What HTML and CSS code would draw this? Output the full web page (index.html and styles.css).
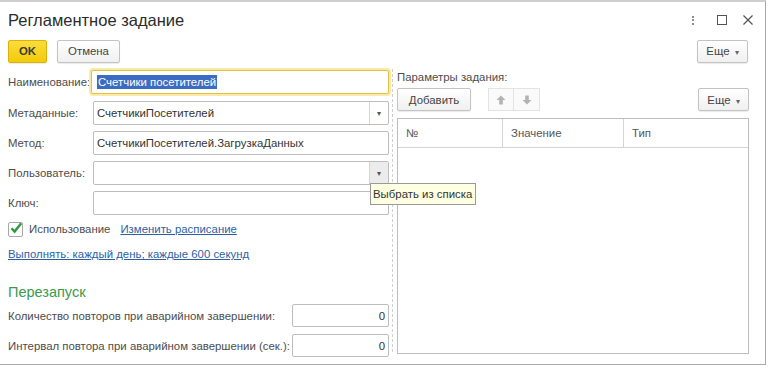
FILE: index.html
```html
<!DOCTYPE html>
<html lang="ru">
<head>
  <meta charset="UTF-8" />
  <title>Регламентное задание</title>
  <link rel="stylesheet" href="styles.css">
</head>
<body>
  <div class="window">
    <div class="title-bar">
      <div class="title">Регламентное задание</div>
      <div class="win-icons">
        <span class="icon-more"><i></i><i></i><i></i></span>
        <span class="icon-max"></span>
        <svg class="icon-close" width="10" height="10" viewBox="0 0 10 10"><path d="M0.5 0.5 L9.5 9.5 M9.5 0.5 L0.5 9.5" stroke="#555" stroke-width="1.2" fill="none"/></svg>
      </div>
    </div>

    <div class="toolbar">
      <button class="btn btn-ok">OK</button>
      <button class="btn btn-cancel">Отмена</button>
      <div class="spacer"></div>
      <button class="btn btn-more">Еще <span class="caret">▾</span></button>
    </div>

    <div class="content">
      <div class="left-col">
        <div class="form-row row-name">
          <label>Наименование:</label>
          <div class="field focused"><span class="selected">Счетчики посетителей</span></div>
        </div>
        <div class="form-row">
          <label>Метаданные:</label>
          <div class="field with-drop"><span class="value">СчетчикиПосетителей</span><span class="drop">▾</span></div>
        </div>
        <div class="form-row">
          <label>Метод:</label>
          <div class="field"><span class="value">СчетчикиПосетителей.ЗагрузкаДанных</span></div>
        </div>
        <div class="form-row">
          <label>Пользователь:</label>
          <div class="field with-drop"><span class="value"></span><span class="drop hover">▾</span></div>
          <div class="tooltip">Выбрать из списка</div>
        </div>
        <div class="form-row">
          <label>Ключ:</label>
          <div class="field"></div>
        </div>

        <div class="check-row">
          <span class="checkbox">
            <svg width="14" height="14" viewBox="0 0 14 14"><path d="M2.5 7.2 L5.6 10.6 L12.2 2.2" stroke="#2f9a3e" stroke-width="2.4" fill="none"/></svg>
          </span>
          <span class="check-label">Использование</span>
          <a class="link" href="#">Изменить расписание</a>
        </div>
        <div class="schedule-row">
          <a class="link" href="#">Выполнять: каждый день; каждые 600 секунд</a>
        </div>

        <div class="group-title">Перезапуск</div>
        <div class="num-row">
          <label>Количество повторов при аварийном завершении:</label>
          <div class="field num">0</div>
        </div>
        <div class="num-row">
          <label>Интервал повтора при аварийном завершении (сек.):</label>
          <div class="field num">0</div>
        </div>
      </div>

      <div class="separator"></div>

      <div class="right-col">
        <div class="params-title">Параметры задания:</div>
        <div class="params-bar">
          <button class="btn btn-add">Добавить</button>
          <div class="arrows">
            <button class="btn-arrow">
              <svg width="10" height="10" viewBox="0 0 10 10"><path d="M5 0.5 L9.5 5 L6.8 5 L6.8 9.5 L3.2 9.5 L3.2 5 L0.5 5 Z" fill="#b3b3b3"/></svg>
            </button>
            <button class="btn-arrow">
              <svg width="10" height="10" viewBox="0 0 10 10"><path d="M5 9.5 L9.5 5 L6.8 5 L6.8 0.5 L3.2 0.5 L3.2 5 L0.5 5 Z" fill="#b3b3b3"/></svg>
            </button>
          </div>
          <div class="spacer"></div>
          <button class="btn btn-more">Еще <span class="caret">▾</span></button>
        </div>
        <div class="table">
          <div class="table-head">
            <div class="col col-num">№</div>
            <div class="col col-value">Значение</div>
            <div class="col col-type">Тип</div>
          </div>
          <div class="table-body"></div>
        </div>
      </div>
    </div>
  </div>
</body>
</html>
```

FILE: styles.css
```css
body {
  margin: 0;
  font-family: "Liberation Sans", Arial, sans-serif;
  font-size: 11.4px;
  color: #4d4d4d;
  background: #fff;
  overflow: hidden;
}
.window {
  width: 765px;
  height: 362px;
  border-top: 2px solid #cfcfcf;
  border-right: 1px solid #a9a9a9;
  border-bottom: 1px solid #a9a9a9;
  background: #fff;
  position: relative;
}
.title-bar {
  display: flex;
  align-items: center;
  height: 34px;
  padding: 0 0 0 8px;
}
.title {
  font-size: 16.5px;
  color: #2b2b2b;
  flex: 1;
  padding-top: 2px;
}
.win-icons {
  display: flex;
  align-items: center;
  padding-top: 2px;
}
.icon-more {
  display: flex;
  flex-direction: column;
  gap: 1.5px;
  width: 3px;
  margin-right: 22px;
}
.icon-more i {
  display: block;
  width: 2px;
  height: 2px;
  background: #666;
  border-radius: 1px;
}
.icon-max {
  width: 8px;
  height: 8px;
  border: 1px solid #555;
  margin-right: 16px;
}
.icon-close {
  margin-right: 12px;
}
.toolbar {
  display: flex;
  align-items: center;
  height: 24px;
  margin-top: 3px;
  padding: 0 17px 0 8px;
  gap: 10px;
}
.spacer {
  flex: 1;
}
.btn {
  font-family: inherit;
  font-size: 11.4px;
  color: #444;
  height: 23px;
  padding: 0 10px;
  border: 1px solid #c3c3c3;
  border-radius: 2px;
  background: linear-gradient(#ffffff, #f0f0f0);
  box-shadow: 0 1px 1px rgba(0,0,0,0.08);
}
.btn-ok {
  width: 39px;
  font-weight: bold;
  color: #3a3a3a;
  background: linear-gradient(#fbdc3c, #f3cb09);
  border-color: #d9b30c;
}
.btn-cancel {
  width: 63px;
}
.btn-more {
  width: 51px;
  padding: 0 6px;
}
.caret {
  font-size: 8px;
  color: #666;
  margin-left: 2px;
}
.content {
  display: flex;
  margin-top: 6px;
  padding-left: 8px;
}
.left-col {
  width: 381px;
  position: relative;
}
.form-row {
  display: flex;
  align-items: center;
  height: 24px;
  margin-bottom: 6px;
  position: relative;
}
.form-row label {
  width: 85px;
  flex: none;
}
.row-name {
  height: 25px;
  margin-bottom: 7px;
}
.field {
  flex: 1;
  border: 1px solid #bdbdbd;
  border-radius: 2px;
  background: #fff;
  display: flex;
  align-items: center;
  color: #333;
  padding-left: 3px;
  box-sizing: border-box;
  height: 24px;
}
.focused {
  border: 1px solid #e2c04a;
  box-shadow: 0 0 0 2px #faeaa6;
  margin-left: -2px;
  padding-left: 5px;
}
.selected {
  background: #3c6bc4;
  color: #fff;
  padding: 1px 1px;
}
.with-drop .value {
  flex: 1;
}
.drop {
  width: 18px;
  height: 22px;
  border-left: 1px solid #d6d6d6;
  font-size: 8px;
  color: #555;
  display: flex;
  align-items: center;
  justify-content: center;
}
.drop.hover {
  background: #ececec;
}
.tooltip {
  position: absolute;
  left: 362px;
  top: 22px;
  z-index: 5;
  background: #ffffe1;
  border: 1px solid #9a9a9a;
  color: #333;
  font-size: 11.4px;
  padding: 4px 3px 4px 2px;
  white-space: nowrap;
}
.check-row {
  display: flex;
  align-items: center;
  height: 16px;
  margin-top: 2px;
}
.checkbox {
  width: 13px;
  height: 13px;
  border: 1px solid #a8a8a8;
  border-radius: 2px;
  position: relative;
  margin-right: 6px;
}
.checkbox svg {
  position: absolute;
  left: 0;
  top: -2px;
}
.check-label {
  margin-right: 10px;
}
.link {
  color: #2d5fa6;
  text-decoration: underline;
}
.schedule-row {
  height: 16px;
  margin-top: 9px;
  display: flex;
  align-items: center;
}
.group-title {
  font-size: 14.5px;
  color: #3a9a4e;
  margin-top: 20px;
  height: 20px;
  line-height: 20px;
}
.num-row {
  display: flex;
  align-items: center;
  height: 23px;
  margin-top: 7px;
}
.group-title + .num-row {
  margin-top: 2px;
}
.num-row label {
  width: 284px;
  flex: none;
  white-space: nowrap;
}
.field.num {
  justify-content: flex-end;
  padding-right: 3px;
  height: 23px;
}
.separator {
  width: 0;
  border-left: 1px dashed #cfcfcf;
  margin: 0 4px 0 3px;
  height: 283px;
}
.right-col {
  width: 352px;
  display: flex;
  flex-direction: column;
}
.params-title {
  height: 16px;
  line-height: 16px;
}
.params-bar {
  display: flex;
  align-items: center;
  height: 23px;
  margin-top: 3px;
}
.btn-add {
  width: 74px;
}
.arrows {
  display: flex;
  margin-left: 17px;
}
.btn-arrow {
  width: 26px;
  height: 23px;
  border: 1px solid #e3e3e3;
  background: #fafafa;
  display: flex;
  align-items: center;
  justify-content: center;
  padding: 0;
}
.btn-arrow + .btn-arrow {
  border-left: none;
}
.table {
  margin-top: 7px;
  border: 1px solid #bdbdbd;
  height: 236px;
  box-sizing: border-box;
  display: flex;
  flex-direction: column;
}
.table-head {
  display: flex;
  height: 28px;
  border-bottom: 1px solid #d4d4d4;
  color: #555;
}
.col {
  display: flex;
  align-items: center;
  padding-left: 8px;
  border-right: 1px solid #d4d4d4;
}
.col-num {
  width: 96px;
}
.col-value {
  width: 112px;
}
.col-type {
  flex: 1;
  border-right: none;
}
```
